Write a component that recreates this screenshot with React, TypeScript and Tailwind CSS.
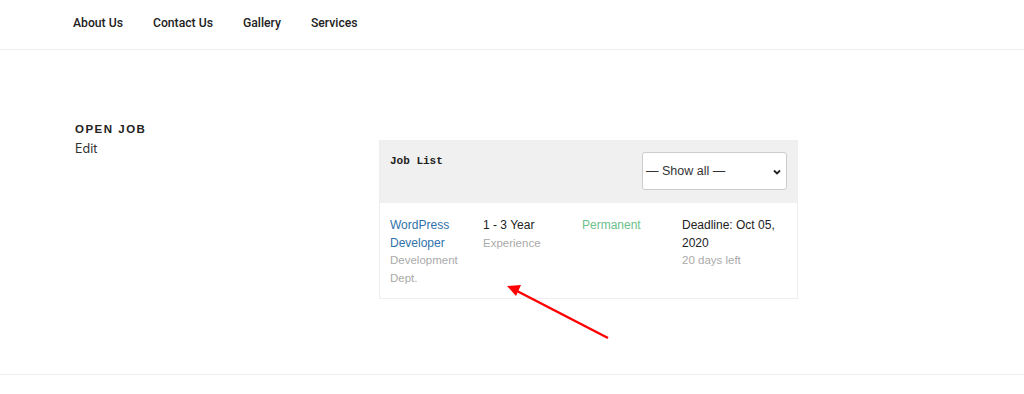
import React from 'react';

const navItems = ['About Us', 'Contact Us', 'Gallery', 'Services'];

export default function App() {
  return (
    <div className="relative w-[1024px] h-[394px] bg-white overflow-hidden font-['Liberation_Sans',Arial,sans-serif]">
      {/* top navigation */}
      <header className="h-[50px] border-b border-[#eeeeee]">
        <nav className="flex items-center gap-[30px] pl-[73px] pt-[14px] font-['Roboto',sans-serif] text-[12.2px] font-medium text-[#222]">
          {navItems.map((item) => (
            <span key={item} className="leading-[18px]">
              {item}
            </span>
          ))}
        </nav>
      </header>

      <main className="h-[325px] border-b border-[#eeeeee] flex pl-[75px] pt-[70px]">
        <div className="w-[304px]">
          <h2 className="text-[11.5px] font-bold tracking-[0.13em] text-[#222] leading-[16px] pt-[1px]">OPEN JOB</h2>
          <a className="block text-[12.5px] text-[#333] leading-[18px] mt-[3px] font-['Inter',sans-serif]">Edit</a>
        </div>

        {/* job list card */}
        <div className="mt-[20px] w-[419px] h-[159px] border border-[#eeeeee] self-start">
          <div className="h-[62px] bg-[#f0f0f0] flex justify-between pl-[10px] pr-[10px] pt-[11px]">
            <span className="font-['Liberation_Mono','DejaVu_Sans_Mono',monospace] font-bold text-[11px] text-[#222] leading-[16px] pt-[1px]">
              Job List
            </span>
            <div className="relative w-[145px] h-[38px] bg-white border border-[#cccccc] rounded-[3px] flex items-center pl-[3px] pr-[5px] justify-between">
              <span className="text-[12.5px] text-[#333]">— Show all —</span>
              <svg width="8" height="6" viewBox="0 0 8 6" className="mt-[1px]">
                <path d="M1 1.5 L4 4.5 L7 1.5" stroke="#222" strokeWidth="1.8" fill="none" />
              </svg>
            </div>
          </div>
          <div className="grid grid-cols-[93px_99px_100px_1fr] pl-[10px] pr-[10px] pt-[14px] text-[12px] leading-[17.5px]">
            <div>
              <div className="text-[#2f72a9]">WordPress Developer</div>
              <div className="text-[#aaaaaa] text-[11.5px] pr-[20px]">Development Dept.</div>
            </div>
            <div>
              <div className="text-[#222]">1 - 3 Year</div>
              <div className="text-[#aaaaaa] text-[11.5px]">Experience</div>
            </div>
            <div>
              <div className="text-[#6cc18a]">Permanent</div>
            </div>
            <div>
              <div className="text-[#222]">Deadline: Oct 05, 2020</div>
              <div className="text-[#aaaaaa] text-[11.5px]">20 days left</div>
            </div>
          </div>
        </div>
      </main>

      {/* red annotation arrow */}
      <svg className="absolute left-0 top-0 pointer-events-none" width="1024" height="394">
        <line x1="608" y1="338" x2="517" y2="291" stroke="#ff0000" strokeWidth="2.5" />
        <polygon points="507,286 521,285 516,296" fill="#ff0000" />
      </svg>
    </div>
  );
}
